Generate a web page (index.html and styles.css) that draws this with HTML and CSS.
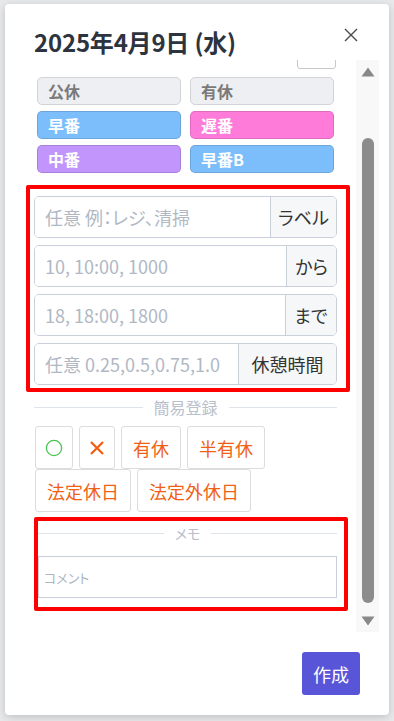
FILE: index.html
```html
<!DOCTYPE html>
<html lang="ja">
<head>
<meta charset="utf-8">
<title>シフト作成</title>
<link rel="stylesheet" href="styles.css">
</head>
<body>
<div class="modal">
  <div class="modal-header">
    <h2 class="title">2025年4月9日 (水)</h2>
    <button class="close" aria-label="閉じる">
      <svg width="14" height="14" viewBox="0 0 14 14"><path d="M1 1L13 13M13 1L1 13" stroke="#4a4a4a" stroke-width="1.4" fill="none"/></svg>
    </button>
  </div>
  <div class="scroll-area">
    <div class="scroll-view">
      <div class="scroll-content">
        <div class="top-row">
          <button class="mini-btn"></button>
        </div>
        <div class="shift-grid">
          <button class="shift gray">公休</button>
          <button class="shift gray">有休</button>
          <button class="shift blue">早番</button>
          <button class="shift pink">遅番</button>
          <button class="shift purple">中番</button>
          <button class="shift blue">早番B</button>
        </div>
        <div class="red-box times">
          <div class="input-group"><input class="field" placeholder="任意 例：レジ、清掃"><span class="addon addon-label">ラベル</span></div>
          <div class="input-group"><input class="field" placeholder="10, 10:00, 1000"><span class="addon addon-from">から</span></div>
          <div class="input-group"><input class="field" placeholder="18, 18:00, 1800"><span class="addon addon-to">まで</span></div>
          <div class="input-group"><input class="field" placeholder="任意 0.25,0.5,0.75,1.0"><span class="addon addon-break">休憩時間</span></div>
        </div>
        <div class="divider">簡易登録</div>
        <div class="quick">
          <button class="qbtn icon-o"><svg width="18" height="18" viewBox="0 0 18 18"><circle cx="9" cy="9" r="7.6" fill="none" stroke="#4cc254" stroke-width="1.3"/></svg></button>
          <button class="qbtn icon-x"><svg width="16" height="16" viewBox="0 0 16 16"><path d="M2 2L14 14M14 2L2 14" stroke="#f25c10" stroke-width="2.2" fill="none"/></svg></button>
          <button class="qbtn">有休</button>
          <button class="qbtn">半有休</button>
          <button class="qbtn">法定休日</button>
          <button class="qbtn">法定外休日</button>
        </div>
        <div class="red-box memo">
          <div class="divider small">メモ</div>
          <input class="comment" placeholder="コメント">
        </div>
        <div class="after-space"></div>
      </div>
    </div>
    <div class="scrollbar">
      <svg class="arrow" width="14" height="10" viewBox="0 0 14 10"><path d="M7 0.5L13.5 9.5H0.5Z" fill="#888"/></svg>
      <div class="thumb"></div>
      <svg class="arrow down" width="14" height="10" viewBox="0 0 14 10"><path d="M0.5 0.5H13.5L7 9.5Z" fill="#888"/></svg>
    </div>
  </div>
  <div class="modal-footer">
    <button class="primary">作成</button>
  </div>
</div>
</body>
</html>
```

FILE: styles.css
```css
* { box-sizing: border-box; }
html, body { margin: 0; padding: 0; }
body {
  background: #e8e9eb;
  font-family: "Noto Sans CJK JP", "Noto Sans", sans-serif;
  font-feature-settings: "palt";
  width: 394px;
  height: 721px;
  overflow: hidden;
}
button, input {
  font-family: inherit;
  font-feature-settings: inherit;
}
button { cursor: pointer; }

.modal {
  margin: 4px 0 0 5px;
  width: 384px;
  height: 711px;
  background: #fff;
  border-radius: 4px;
  box-shadow: 0 2px 8px rgba(0,0,0,0.18);
  display: flex;
  flex-direction: column;
}

.modal-header {
  position: relative;
  height: 56px;
  padding: 23px 0 0 29px;
}
.title {
  margin: 0;
  font-size: 24px;
  line-height: 29px;
  font-weight: 700;
  color: #2d3440;
  letter-spacing: -0.2px;
  font-feature-settings: normal;
}
.close {
  position: absolute;
  top: 22px;
  right: 29px;
  width: 18px;
  height: 18px;
  padding: 2px;
  border: none;
  background: none;
  display: flex;
}

.scroll-area {
  height: 572px;
  display: flex;
  padding-left: 19px;
}
.scroll-view {
  width: 330px;
  overflow: hidden;
}
.scroll-content {
  margin-top: -27px;
  padding: 0 17px 0 10px;
}
.top-row {
  height: 36px;
  display: flex;
  justify-content: flex-end;
  align-items: flex-end;
  padding-right: 1px;
}
.mini-btn {
  width: 39px;
  height: 30px;
  border: 1px solid #c8c8c8;
  border-radius: 3px;
  background: #fff;
}

.shift-grid {
  margin-top: 8px;
  padding: 0 3px;
  display: grid;
  grid-template-columns: 1fr 1fr;
  column-gap: 9px;
  row-gap: 6px;
}
.shift {
  height: 28px;
  border: 1px solid rgba(0,0,0,0.13);
  border-radius: 5px;
  text-align: left;
  padding: 0 10px;
  font-size: 16px;
  font-weight: 700;
  color: #fff;
}
.shift.gray { background: #eeeff2; color: #7a7a7a; border-color: #d2d3d6; }
.shift.blue { background: #7cbefb; }
.shift.pink { background: #ff7bda; }
.shift.purple { background: #c195fb; }

.red-box {
  border: 4px solid #ff0000;
  border-radius: 2px;
}
.times {
  margin: 12px -13px 0 -8px;
  padding: 7px 9px 3px 4px;
  display: flex;
  flex-direction: column;
  gap: 7px;
}
.input-group {
  display: flex;
  height: 42px;
  border: 1px solid #c9d0dc;
  border-radius: 5px;
  overflow: hidden;
}
.field {
  flex: 1;
  min-width: 0;
  border: none;
  outline: none;
  padding: 0 8px 0 10px;
  font-size: 18px;
  color: #333;
  background: #fff;
}
.field::placeholder { color: #b0b8c4; }
.addon {
  flex: none;
  display: flex;
  align-items: center;
  justify-content: center;
  background: #f6f7f9;
  border-left: 1px solid #c9d0dc;
  font-size: 18px;
  color: #333;
  white-space: nowrap;
}
.addon-label { width: 66px; }
.addon-from { width: 50px; }
.addon-to { width: 51px; }
.addon-break { width: 98px; }

.divider {
  display: flex;
  align-items: center;
  gap: 11px;
  height: 24px;
  margin-top: 3px;
  font-size: 16px;
  color: #b8c0cc;
}
.divider::before, .divider::after {
  content: "";
  flex: 1;
  height: 1px;
  background: #dfe3ea;
}
.divider.small { font-size: 14px; margin-top: 0; }

.quick {
  margin-top: 7px;
  padding-left: 1px;
  display: flex;
  flex-wrap: wrap;
  column-gap: 6px;
  row-gap: 0;
}
.qbtn {
  height: 43px;
  padding: 0 11px;
  border: 1px solid #dcdcdc;
  border-radius: 3px;
  background: #fff;
  color: #f05f17;
  font-size: 18px;
  display: flex;
  align-items: center;
  justify-content: center;
}
.qbtn.icon-o { width: 38px; padding: 0; }
.qbtn.icon-x { width: 36px; padding: 0; }

.memo {
  margin: 5px -11px 0 0;
  padding: 0 7px 9px 0;
}
.comment {
  display: block;
  width: 100%;
  height: 42px;
  margin-top: 11px;
  border: 1px solid #c9d0dc;
  padding: 0 5px;
  font-size: 13px;
  outline: none;
}
.comment::placeholder { color: #aeb6c2; }
.after-space { height: 60px; }

.scrollbar {
  margin-left: 2px;
  width: 23px;
  background: #f8f8f8;
  display: flex;
  flex-direction: column;
  align-items: center;
  padding-top: 7px;
}
.arrow { display: block; }
.thumb {
  width: 12px;
  height: 465px;
  margin-top: 61px;
  background: #8c8c8c;
  border-radius: 6px;
}
.arrow.down { margin-top: 13px; }

.modal-footer {
  display: flex;
  justify-content: flex-end;
  padding: 20px 29px 0 0;
}
.primary {
  height: 43px;
  padding: 0 11px;
  border: none;
  border-radius: 3px;
  background: #5855d8;
  color: #fff;
  font-size: 18px;
}
```
